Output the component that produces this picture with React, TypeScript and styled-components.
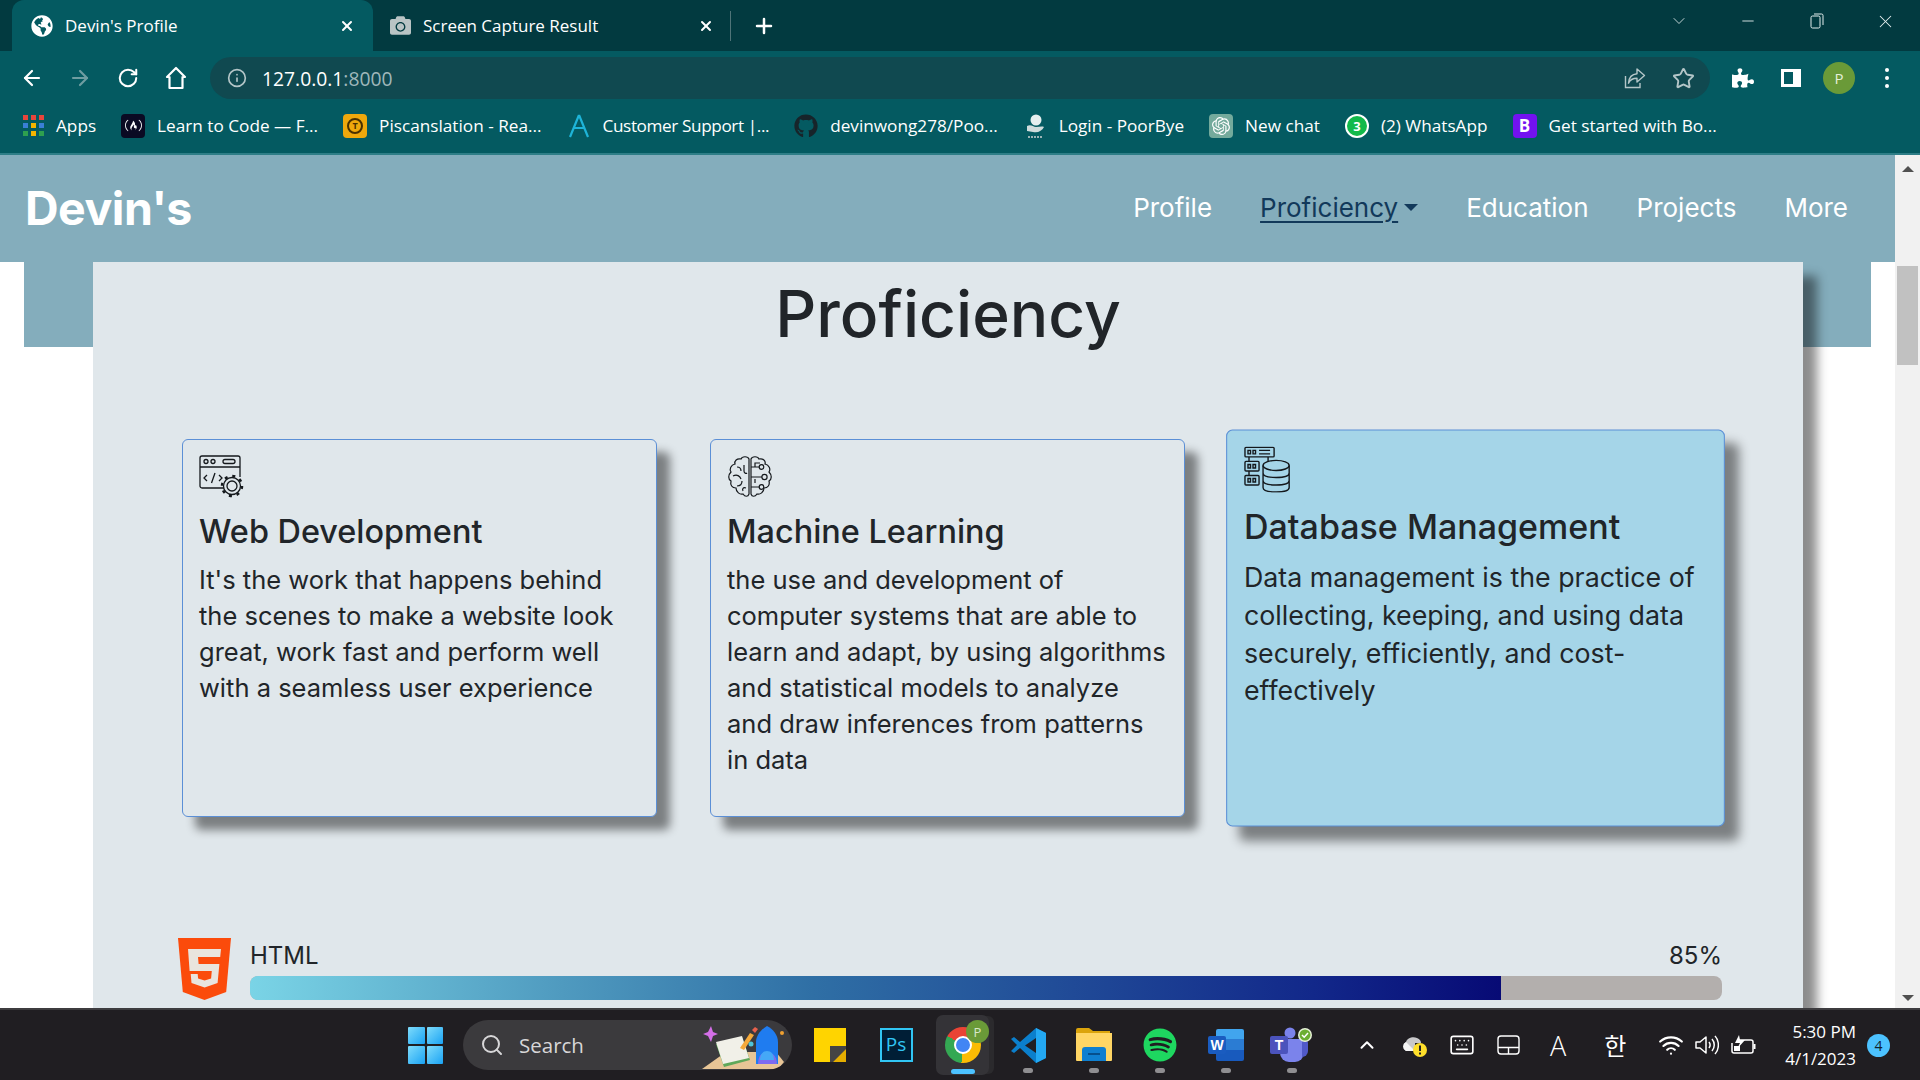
import React from "react"
import styled, { createGlobalStyle } from "styled-components"
import {
  ArrowLeft, ArrowRight, RotateCw, Info, Star, Plus, X, ChevronDown, ChevronUp,
  Minus, Search, Wifi, Keyboard,
} from "lucide-react"
import { FaGithub, FaPuzzlePiece, FaCamera, FaGlobeAmericas, FaFreeCodeCamp, FaSpotify } from "react-icons/fa"
import { SiOpenai } from "react-icons/si"

const UI_FONT = `"Open Sans", "Noto Sans", sans-serif`
const PAGE_FONT = `Inter, "Noto Sans", sans-serif`

const GlobalStyle = createGlobalStyle`
  html, body { margin: 0; padding: 0; height: 100%; overflow: hidden; background: #fff; }
  * { box-sizing: border-box; }
  #root { height: 100%; }
`

const Screen = styled.div`
  width: 1920px;
  height: 1080px;
  display: flex;
  flex-direction: column;
  overflow: hidden;
`

/* ---------- browser chrome ---------- */
const TabStrip = styled.div`
  height: 51px;
  flex: none;
  background: #023a40;
  display: flex;
  padding-left: 12px;
  color: #fff;
  font-family: ${UI_FONT};
`
const Tab = styled.div<{ $active?: boolean }>`
  width: 361px;
  height: 51px;
  display: flex;
  align-items: center;
  gap: 12px;
  padding: 0 18px 0 19px;
  font-size: 17px;
  margin-left: ${(p) => (p.$active ? 0 : -2)}px;
  background: ${(p) => (p.$active ? "#045a61" : "transparent")};
  border-radius: 12px 12px 0 0;
`
const TabTitle = styled.span`
  flex: 1;
  white-space: nowrap;
`
const TabDivider = styled.div`
  width: 1px;
  height: 30px;
  margin: 11px 0 0 -2px;
  background: #4f7478;
`
const NewTab = styled.div`
  margin-left: 21px;
  height: 51px;
  display: flex;
  align-items: center;
`
const WindowControls = styled.div`
  margin-left: auto;
  display: flex;
`
const WindowButton = styled.div`
  width: 69px;
  height: 42px;
  display: flex;
  align-items: center;
  justify-content: center;
  color: #e4eeee;
`
const RestoreIcon = () => (
  <svg width="14" height="16" viewBox="0 0 14 16" fill="none" stroke="currentColor" strokeWidth="1">
    <rect x="1" y="3" width="9" height="12" rx="1.5" />
    <path d="M4 1h7.5a1.5 1.5 0 0 1 1.5 1.5V12" />
  </svg>
)

const Toolbar = styled.div`
  height: 54px;
  flex: none;
  background: #045a61;
  display: flex;
  align-items: center;
  padding: 0 9px 0 8px;
  color: #fff;
  font-family: ${UI_FONT};
`
const ToolButton = styled.div<{ $dim?: boolean }>`
  width: 48px;
  height: 42px;
  flex: none;
  display: flex;
  align-items: center;
  justify-content: center;
  color: ${(p) => (p.$dim ? "#6f9da1" : "#fff")};
`
const AddressBar = styled.div`
  flex: 1;
  height: 42px;
  margin: 0 9px 0 10px;
  padding: 0 3px 0 17px;
  display: flex;
  align-items: center;
  background: #104950;
  border-radius: 21px;
`
const Url = styled.div`
  margin-left: 15px;
  font-size: 19.3px;
  flex: 1;
`
const UrlPort = styled.span`
  color: #9fb7ba;
`
const AddressIcon = styled.div`
  width: 48px;
  display: flex;
  justify-content: center;
  color: #b4c6c8;
`
const Avatar = styled.div`
  width: 32px;
  height: 32px;
  border-radius: 50%;
  background: #6a9a38;
  color: #e4efd8;
  font-size: 15px;
  display: flex;
  align-items: center;
  justify-content: center;
`
const MenuDots = styled.div`
  display: flex;
  flex-direction: column;
  gap: 4px;
`
const MenuDot = styled.i`
  display: block;
  width: 4px;
  height: 4px;
  border-radius: 50%;
  background: #fff;
`
const ShareIcon = () => (
  <svg width="22" height="22" viewBox="0 0 22 22" fill="none" stroke="currentColor" strokeWidth="1.4">
    <path d="M1.5 9v11.5H16V16" />
    <path d="M13 2l7.5 6.5L13 15v-3.8c-4 0-7 1.4-8.5 5 .4-5.400 3.500-9 8.500-9.400z" strokeLinejoin="round" />
  </svg>
)
const SidePanelIcon = () => (
  <svg width="22" height="22" viewBox="0 0 22 22">
    <path d="M1 2h20v18H1z" fill="#fff" />
    <path d="M4 5h9v12H4z" fill="#045a61" />
  </svg>
)
const HouseIcon = () => (
  <svg width="22" height="24" viewBox="0 0 22 24" fill="none" stroke="#fff" strokeWidth="2.200" strokeLinejoin="round">
    <path d="M11 2L2 11h2.500v11h13V11H20z" />
  </svg>
)

const Bookmarks = styled.div`
  height: 50px;
  flex: none;
  background: #045a61;
  border-bottom: 2px solid #2e7e87;
  padding: 0 0 7px 23px;
  display: flex;
  align-items: center;
  gap: 25px;
  color: #fff;
  font-family: ${UI_FONT};
  font-size: 17.2px;
`
const Bookmark = styled.div<{ $tight?: boolean }>`
  display: flex;
  align-items: center;
  gap: 12px;
  white-space: nowrap;
  letter-spacing: ${(p) => (p.$tight ? "-0.4px" : "normal")};
`
const AppsGrid = styled.div`
  width: 21px;
  display: grid;
  grid-template-columns: repeat(3, 5px);
  gap: 3px;
`
const AppsCell = styled.i<{ $color: string }>`
  height: 5px;
  background: ${(p) => p.$color};
`
const FavTile = styled.div<{ $bg: string; $fg?: string }>`
  width: 24px;
  height: 24px;
  flex: none;
  display: flex;
  align-items: center;
  justify-content: center;
  background: ${(p) => p.$bg};
  color: ${(p) => p.$fg || "#fff"};
  border-radius: 4px;
  font-weight: 700;
  font-size: 17px;
`
const PiscanDisc = styled.div`
  width: 16px;
  height: 16px;
  border-radius: 50%;
  border: 2px solid #4a3000;
  color: #4a3000;
  font-size: 9px;
  line-height: 12px;
  text-align: center;
`
const WhatsBadge = styled.div`
  width: 24px;
  height: 24px;
  flex: none;
  border-radius: 50%;
  border: 2px solid #fff;
  background: #12b94a;
  font-size: 13px;
  font-weight: 700;
  display: flex;
  align-items: center;
  justify-content: center;
`
const AntennaIcon = () => (
  <svg width="24" height="24" viewBox="0 0 24 24" fill="none" stroke="#1eb4d8" strokeWidth="2.200">
    <path d="M12 1L3 23M12 1l9 22M7 14h10" />
  </svg>
)
const PoorByeIcon = () => (
  <svg width="24" height="26" viewBox="0 0 24 26">
    <circle cx="13" cy="7" r="5.500" fill="#e5efef" />
    <path d="M4 13c4-2 6 1 9 1s6-1 8 0c-2 4-6 6-11 5l-6-1z" fill="#cfdcdc" />
    <path d="M5 24h14" stroke="#9ab3b5" strokeWidth="2" strokeDasharray="2 1" />
  </svg>
)

/* ---------- page ---------- */
const PageRow = styled.div`
  flex: 1;
  min-height: 0;
  display: flex;
  font-family: ${PAGE_FONT};
  color: #212529;
`
const PageMain = styled.div`
  flex: 1;
  min-width: 0;
  background: #fff;
  overflow: hidden;
`
const Navbar = styled.nav`
  height: 107px;
  background: #84adbc;
  display: flex;
  align-items: center;
  padding: 0 47px 2px 25px;
`
const Brand = styled.div`
  font-size: 46.5px;
  font-weight: 700;
  letter-spacing: -0.5px;
  color: #fff;
`
const NavLinks = styled.div`
  margin-left: auto;
  display: flex;
  gap: 48px;
`
const NavLink = styled.a<{ $active?: boolean }>`
  font-size: 26px;
  color: ${(p) => (p.$active ? "#12395a" : "#fff")};
  text-decoration: ${(p) => (p.$active ? "underline" : "none")};
  text-underline-offset: 4px;
  text-decoration-thickness: 2px;
  display: flex;
  align-items: center;
  gap: 6px;
`
const Caret = styled.i`
  width: 0;
  height: 0;
  border-left: 7px solid transparent;
  border-right: 7px solid transparent;
  border-top: 7px solid #12395a;
`
const Banner = styled.div`
  height: 85px;
  margin: 0 24px;
  background: #84adbc;
`
const Container = styled.main`
  position: relative;
  margin: -85px 92px 0 93px;
  height: 900px;
  background: #e0e7eb;
  box-shadow: 14px 14px 10px rgba(0, 0, 0, 0.45);
  padding-top: 14px;
`
const Heading = styled.h1`
  margin: 0;
  text-align: center;
  font-size: 64px;
  line-height: 76px;
  font-weight: 500;
`
const CardRow = styled.div`
  margin: 87px 0 0 89px;
  display: grid;
  grid-template-columns: repeat(3, 475px);
  gap: 53px;
`
const Card = styled.article<{ $raised?: boolean }>`
  height: 378px;
  padding: 15px 16px;
  border: 1px solid #5b8fd6;
  border-radius: 6px;
  background: ${(p) => (p.$raised ? "#a5d5e8" : "#e0e7eb")};
  box-shadow: 13px 13px 10px rgba(0, 0, 0, 0.45);
  transform: ${(p) => (p.$raised ? "scale(1.05)" : "none")};
`
const CardIcon = styled.div`
  height: 44px;
  color: #14181c;
`
const CardTitle = styled.h3`
  margin: 13px 0 0;
  font-size: 32.4px;
  line-height: 40px;
  font-weight: 500;
`
const CardText = styled.p`
  margin: 10px 0 0;
  font-size: 25.5px;
  line-height: 36px;
`
const SkillRow = styled.div`
  margin: 121px 0 0 85px;
  width: 1544px;
  display: flex;
  gap: 19px;
`
const SkillBody = styled.div`
  flex: 1;
  padding-top: 2px;
`
const SkillLabels = styled.div`
  display: flex;
  justify-content: space-between;
  font-size: 24px;
  line-height: 31px;
  margin-bottom: 5px;
`
const Track = styled.div`
  height: 24px;
  border-radius: 8px;
  background: #b3afad;
  overflow: hidden;
`
const Fill = styled.div`
  height: 100%;
  background: linear-gradient(90deg, #7ad4e6 0%, #4f9abf 25%, #2f6fa5 45%, #12288a 85%, #070a75 100%);
`
const ScrollTrack = styled.div`
  width: 25px;
  flex: none;
  background: #f1f1f1;
  display: flex;
  flex-direction: column;
  align-items: center;
  padding-top: 11px;
`
const ScrollArrow = styled.i<{ $down?: boolean }>`
  width: 0;
  height: 0;
  border-left: 6px solid transparent;
  border-right: 6px solid transparent;
  ${(p) => (p.$down ? "border-top: 6px solid #505050; margin-bottom: 7px;" : "border-bottom: 6px solid #505050;")}
`
const ScrollThumb = styled.div`
  width: 21px;
  height: 99px;
  margin: 94px 0 auto;
  background: #c1c1c1;
`

/* ---------- taskbar ---------- */
const Taskbar = styled.footer`
  height: 72px;
  flex: none;
  background: #201e22;
  border-top: 2px solid #3d3c3f;
  display: flex;
  align-items: center;
  padding: 0 30px 0 408px;
  color: #fff;
  font-family: ${UI_FONT};
`
const StartGrid = styled.div`
  width: 35px;
  height: 37px;
  display: grid;
  grid-template-columns: 1fr 1fr;
  gap: 2px;
`
const StartPane = styled.i`
  background: linear-gradient(135deg, #7fdcfb, #1aa3f4);
  border-radius: 1px;
`
const SearchPill = styled.div`
  position: relative;
  width: 329px;
  height: 50px;
  margin: 0 5px 0 20px;
  padding-left: 17px;
  border-radius: 25px;
  background: #3b3a3d;
  display: flex;
  align-items: center;
  gap: 15px;
  font-size: 20.5px;
  color: #d7d6d8;
  overflow: hidden;
`
const SearchArt = styled.svg`
  position: absolute;
  right: 8px;
  bottom: 0;
`
const TaskSlot = styled.div<{ $running?: boolean; $open?: boolean }>`
  position: relative;
  width: 66px;
  height: 60px;
  flex: none;
  display: flex;
  align-items: center;
  justify-content: center;
  ${(p) => (p.$open ? "&::after { content: ''; position: absolute; bottom: 2px; left: 50%; margin-left: -5px; width: 10px; height: 5px; border-radius: 3px; background: #8f8e91; }" : "")}
  ${(p) => (p.$running ? "background: #343337; border-radius: 7px; width: 53px; margin: 0 6px 0 7px; box-shadow: 6px 0 0 -1px #2b2a2d; &::after { content: ''; position: absolute; bottom: 1px; left: 50%; margin-left: -12px; width: 24px; height: 5px; border-radius: 3px; background: #4cc2ff; }" : "")}
`
const SlotBadge = styled.div`
  position: absolute;
  top: 5px;
  right: 0;
  width: 23px;
  height: 23px;
  border-radius: 50%;
  background: #6a9a38;
  color: #d9e6c9;
  font-size: 13px;
  display: flex;
  align-items: center;
  justify-content: center;
`
const ChromeBall = styled.div`
  width: 36px;
  height: 36px;
  border-radius: 50%;
  background: conic-gradient(from -60deg, #ea4335 0 125deg, #fbbc04 125deg 245deg, #34a853 245deg 360deg);
  display: flex;
  align-items: center;
  justify-content: center;
`
const ChromeEye = styled.i`
  width: 18px;
  height: 18px;
  border-radius: 50%;
  background: #4285f4;
  border: 2.500px solid #fff;
`
const PsTile = styled.div`
  width: 33px;
  height: 34px;
  background: #001e36;
  border: 2px solid #31c5f4;
  color: #31c5f4;
  font-size: 19px;
  line-height: 28px;
  text-align: center;
`
const Tray = styled.div<{ $ml: number }>`
  margin-left: ${(p) => p.$ml}px;
  display: flex;
  align-items: center;
  flex: none;
`
const Clock = styled.div`
  margin-left: auto;
  text-align: right;
  font-size: 17px;
  line-height: 27px;
`
const NotifyBadge = styled.div`
  width: 23px;
  height: 23px;
  margin-left: 11px;
  border-radius: 50%;
  background: #4cc2ff;
  color: #10222c;
  font-size: 14px;
  display: flex;
  align-items: center;
  justify-content: center;
`
const Glyph = styled.span`
  font-family: "Noto Sans CJK KR", ${UI_FONT};
  font-size: 24px;
  line-height: 1;
`
const LightA = styled.span`
  font-family: ${UI_FONT};
  font-size: 27px;
  font-weight: 300;
  line-height: 1;
`

/* ---------- drawn icons ---------- */
const WebDevIcon = () => (
  <svg width="46" height="44" viewBox="0 0 46 44" fill="none" stroke="currentColor" strokeWidth="1.300">
    <path d="M25 33H3a2 2 0 0 1-2-2V3a2 2 0 0 1 2-2h36a2 2 0 0 1 2 2v19" />
    <path d="M1 12h40" />
    <circle cx="7" cy="6.500" r="2" /><circle cx="14" cy="6.500" r="2" />
    <rect x="24" y="4.500" width="12" height="4" rx="2" />
    <path d="M8 20l-3 3 3 3M20 20l3 3-3 3M16 18l-3.500 10" />
    <circle cx="33" cy="31" r="5" />
    <circle cx="33" cy="31" r="8.500" strokeWidth="1.300" />
    <circle cx="33" cy="31" r="10" strokeWidth="2.500" strokeDasharray="3 4.850" />
  </svg>
)
const BrainIcon = () => (
  <svg width="46" height="44" viewBox="0 0 46 44" fill="none" stroke="currentColor" strokeWidth="1.200">
    <path d="M22 4c-1-3-7-3-8 0-4-1-7 2-6 5-4 1-6 5-4 8-3 3-3 7 0 9-1 4 1 7 5 7 0 4 4 7 7 6 2 3 5 3 6 0V4z" />
    <path d="M24 4c1-3 7-3 8 0 4-1 7 2 6 5 4 1 6 5 4 8 3 3 3 7 0 9 1 4-1 7-5 7 0 4-4 7-7 6-2 3-5 3-6 0V4z" />
    <path d="M10 12c3 0 4 2 4 4M6 21c4-2 7 0 8 3M17 10v6c0 2 2 3 3 2M10 31c3 0 5-2 5-5M19 33c-3-1-4 1-3 3" />
    <path d="M24 12h8M24 22h11M24 32h8M28 12v-4h5M28 28v-4" />
    <circle cx="34.500" cy="12" r="2.300" /><circle cx="37.500" cy="22" r="2.600" /><circle cx="34.500" cy="32" r="2.300" />
  </svg>
)
const DatabaseIcon = () => (
  <svg width="44" height="44" viewBox="0 0 46 46" fill="none" stroke="currentColor" strokeWidth="1.400">
    <rect x="1" y="1" width="29" height="9.500" rx="1" />
    <rect x="1" y="15" width="14" height="9.500" rx="1" />
    <rect x="1" y="29" width="14" height="9.500" rx="1" />
    <path d="M4 4h2.500v3.500H4zM9 4h2.500v3.500H9zM4 18h2.500v3.500H4zM9 18h2.500v3.500H9zM4 32h2.500v3.500H4zM9 32h2.500v3.500H9zM15 4h11M15 7.500h11M5 10.500V15M5 24.500V29M24 10.500v4" />
    <ellipse cx="32" cy="19" rx="13" ry="5" />
    <path d="M19 19v22c0 3 6 4.500 13 4.500S45 44 45 41V19M19 26.500c0 3 6 4.500 13 4.500s13-1.500 13-4.500M19 34c0 3 6 4.500 13 4.500S45 37 45 34" />
  </svg>
)
const Html5Icon = () => (
  <svg width="53" height="62" viewBox="0 0 53 62">
    <path d="M0 0h53l-4.800 54L26.500 62 4.800 54z" fill="#fb4b0b" />
    <path d="M10 11h33l-.8 8H20l.6 7h20.800l-1.800 19-13 4.500L13.500 45l-.8-9h7l.4 4.500 6.500 2 6.500-2 .7-7.500H11.600z" fill="#e9e4dd" />
  </svg>
)
const StudyArt = () => (
  <SearchArt width="82" height="46" viewBox="0 0 82 46">
    <path d="M0 45l24-17h50l8 10-6 7z" fill="#e8c596" />
    <path d="M14 20l26-7 8 23-26 7z" fill="#5fa85a" />
    <path d="M14 18l26-6 7 22-26 6z" fill="#f1f0e8" />
    <path d="M38 24l10-15 4 2-10 15z" fill="#f4a93b" />
    <path d="M50 6l3-3 3 2-3 4z" fill="#e8614d" />
    <path d="M54 40V18c0-7 6-13 11-16 6 3 11 9 11 16v22z" fill="#1f7cf0" />
    <path d="M56 40c0-8 4-12 9-12s10 4 10 12z" fill="#7d6bf0" />
    <path d="M58 36c0-6 3-9 7-9s7 3 7 9z" fill="#45a8f7" />
    <path d="M2 12l3-6 2 6 5 2-5 2-2 6-3-6-5-2z" fill="#d46fe8" transform="translate(4 -4)" />
    <circle cx="49" cy="20" r="2.500" fill="#4fc3d8" />
    <circle cx="80" cy="9" r="2" fill="#f0a030" />
  </SearchArt>
)
const StickyIcon = () => (
  <svg width="32" height="34" viewBox="0 0 32 34">
    <path d="M0 0h32v24L22 34H0z" fill="#ffd400" />
    <path d="M16 18h16v6L22 34h-6z" fill="#444" />
    <path d="M32 18v3L19 34h13z" fill="#e5ae00" />
  </svg>
)
const VsCodeIcon = () => (
  <svg width="37" height="37" viewBox="0 0 37 37">
    <path d="M26 1l10 5v25l-10 5-16-15-6 5-3-2 6-6-6-6 3-2 6 5z" fill="#0b7fcc" />
    <path d="M26 1l10 5v25l-10 5z" fill="#23a8f2" />
    <path d="M26 11L15 18.500 26 26z" fill="#201e22" />
  </svg>
)
const FolderIcon = () => (
  <svg width="36" height="34" viewBox="0 0 36 34">
    <path d="M0 2a2 2 0 0 1 2-2h11l4 3h17v5H0z" fill="#dba40c" />
    <path d="M0 5h36v27a1 1 0 0 1-1 1H1a1 1 0 0 1-1-1z" fill="#ffd665" />
    <path d="M6 33V22a3 3 0 0 1 3-3h18a3 3 0 0 1 3 3v11z" fill="#0f7fd0" />
    <path d="M12 26h12" stroke="#064f8c" strokeWidth="2" />
  </svg>
)
const WordIcon = () => (
  <svg width="36" height="32" viewBox="0 0 36 32">
    <path d="M8 2a2 2 0 0 1 2-2h24a2 2 0 0 1 2 2v8H8z" fill="#41a5ee" />
    <path d="M8 10h28v11H8z" fill="#2b7cd3" />
    <path d="M8 21h28v9a2 2 0 0 1-2 2H10a2 2 0 0 1-2-2z" fill="#185abd" />
    <rect x="0" y="7" width="18" height="18" rx="2" fill="#1a5cc0" />
    <text x="9" y="21" textAnchor="middle" fontSize="14" fontWeight="700" fill="#fff" fontFamily="Liberation Sans">W</text>
  </svg>
)
const TeamsIcon = () => (
  <svg width="44" height="36" viewBox="0 0 44 36">
    <circle cx="20" cy="6" r="5.500" fill="#7b83eb" />
    <path d="M10 12h24v14a9 9 0 0 1-9 9h-6a9 9 0 0 1-9-9z" fill="#7b83eb" />
    <path d="M32 14h4a2 2 0 0 1 2 2v8a6 6 0 0 1-6 6z" fill="#5059c9" />
    <rect x="0" y="9" width="18" height="18" rx="2" fill="#4b53bc" />
    <text x="9" y="23" textAnchor="middle" fontSize="14" fontWeight="700" fill="#fff" fontFamily="Liberation Sans">T</text>
    <circle cx="35" cy="8" r="7" fill="#e7f2d9" />
    <circle cx="35" cy="8" r="5.500" fill="#6cae32" />
    <path d="M32 8l2.200 2.200L38 6" stroke="#fff" strokeWidth="1.500" fill="none" />
  </svg>
)
const CloudWarnIcon = () => (
  <svg width="24" height="24" viewBox="0 0 24 24">
    <path d="M3 18a5 5 0 0 1 0-9c1-4 7-6 11-4 3 1 4 3 4 5H12v8z" fill="#c9c9cb" />
    <path d="M3 18a5 5 0 0 1 0-9l9 9z" fill="#f5f5f5" />
    <circle cx="17" cy="17" r="7" fill="#ffdf2b" />
    <path d="M17 12.500v5.500M17 19.500v2" stroke="#201e22" strokeWidth="2" />
  </svg>
)
const TouchpadIcon = () => (
  <svg width="23" height="20" viewBox="0 0 23 20" fill="none" stroke="#fff" strokeWidth="1.400">
    <rect x="1" y="1" width="21" height="18" rx="3" />
    <path d="M1 12.500h21M11.500 12.500V19" />
  </svg>
)
const SpeakerIcon = () => (
  <svg width="24" height="22" viewBox="0 0 24 22" fill="none" stroke="#fff" strokeWidth="1.500">
    <path d="M1 8v6h4l6 5V3L5 8z" strokeLinejoin="round" />
    <path d="M14 8c1.500 2 1.500 4 0 6M17 5c3 3.500 3 8.500 0 12M20 2c4.500 5 4.500 13 0 18" />
  </svg>
)
const BatteryIcon = () => (
  <svg width="25" height="22" viewBox="0 0 25 22" fill="none" stroke="#fff" strokeWidth="1.500">
    <path d="M8 6h12a2 2 0 0 1 2 2v9a2 2 0 0 1-2 2H3a2 2 0 0 1-2-2V9" />
    <path d="M23.500 10v5" strokeWidth="2" />
    <path d="M8 1L4 9h5l-3 6 8-9H9z" fill="#fff" stroke="none" />
    <path d="M3 12h6v5H3z" fill="#fff" stroke="none" />
  </svg>
)

const APPS_COLORS = ["#e8453c", "#e8453c", "#e8453c", "#3a7fd6", "#f4b400", "#3a7fd6", "#2ea04f", "#f4b400", "#2ea04f"]

export default function App() {
  return (
    <>
      <GlobalStyle />
      <Screen>
        <TabStrip>
          <Tab $active>
            <FaGlobeAmericas size={22} />
            <TabTitle>Devin's Profile</TabTitle>
            <X size={16} strokeWidth={3} />
          </Tab>
          <Tab>
            <FaCamera size={21} color="#b9c4c5" />
            <TabTitle>Screen Capture Result</TabTitle>
            <X size={16} strokeWidth={3} />
          </Tab>
          <TabDivider />
          <NewTab><Plus size={24} strokeWidth={2.5} /></NewTab>
          <WindowControls>
            <WindowButton><ChevronDown size={20} strokeWidth={1} /></WindowButton>
            <WindowButton><Minus size={18} strokeWidth={1.2} /></WindowButton>
            <WindowButton><RestoreIcon /></WindowButton>
            <WindowButton><X size={21} strokeWidth={1.2} /></WindowButton>
          </WindowControls>
        </TabStrip>

        <Toolbar>
          <ToolButton><ArrowLeft size={24} strokeWidth={2.2} /></ToolButton>
          <ToolButton $dim><ArrowRight size={24} strokeWidth={2.2} /></ToolButton>
          <ToolButton><RotateCw size={22} strokeWidth={2.2} /></ToolButton>
          <ToolButton><HouseIcon /></ToolButton>
          <AddressBar>
            <Info size={20} color="#b4c6c8" />
            <Url>127.0.0.1<UrlPort>:8000</UrlPort></Url>
            <AddressIcon><ShareIcon /></AddressIcon>
            <AddressIcon><Star size={23} strokeWidth={2} /></AddressIcon>
          </AddressBar>
          <ToolButton><FaPuzzlePiece size={22} /></ToolButton>
          <ToolButton><SidePanelIcon /></ToolButton>
          <ToolButton><Avatar>P</Avatar></ToolButton>
          <ToolButton><MenuDots><MenuDot /><MenuDot /><MenuDot /></MenuDots></ToolButton>
        </Toolbar>

        <Bookmarks>
          <Bookmark>
            <AppsGrid>{APPS_COLORS.map((c, i) => <AppsCell key={i} $color={c} />)}</AppsGrid>
            Apps
          </Bookmark>
          <Bookmark><FavTile $bg="#0a0a23"><FaFreeCodeCamp size={17} /></FavTile>Learn to Code — F...</Bookmark>
          <Bookmark><FavTile $bg="#efa80c"><PiscanDisc>T</PiscanDisc></FavTile>Piscanslation - Rea...</Bookmark>
          <Bookmark $tight><AntennaIcon />Customer Support |...</Bookmark>
          <Bookmark><FaGithub size={24} color="#17242a" />devinwong278/Poo...</Bookmark>
          <Bookmark><PoorByeIcon />Login - PoorBye</Bookmark>
          <Bookmark><FavTile $bg="#74aa9c"><SiOpenai size={18} /></FavTile>New chat</Bookmark>
          <Bookmark><WhatsBadge>3</WhatsBadge>(2) WhatsApp</Bookmark>
          <Bookmark><FavTile $bg="#7312f0">B</FavTile>Get started with Bo...</Bookmark>
        </Bookmarks>

        <PageRow>
          <PageMain>
            <Navbar>
              <Brand>Devin's</Brand>
              <NavLinks>
                <NavLink>Profile</NavLink>
                <NavLink $active>Proficiency<Caret /></NavLink>
                <NavLink>Education</NavLink>
                <NavLink>Projects</NavLink>
                <NavLink>More</NavLink>
              </NavLinks>
            </Navbar>
            <Banner />
            <Container>
              <Heading>Proficiency</Heading>
              <CardRow>
                <Card>
                  <CardIcon><WebDevIcon /></CardIcon>
                  <CardTitle>Web Development</CardTitle>
                  <CardText>It's the work that happens behind the scenes to make a website look great, work fast and perform well with a seamless user experience</CardText>
                </Card>
                <Card>
                  <CardIcon><BrainIcon /></CardIcon>
                  <CardTitle>Machine Learning</CardTitle>
                  <CardText>the use and development of computer systems that are able to learn and adapt, by using algorithms and statistical models to analyze and draw inferences from patterns in data</CardText>
                </Card>
                <Card $raised>
                  <CardIcon><DatabaseIcon /></CardIcon>
                  <CardTitle>Database Management</CardTitle>
                  <CardText>Data management is the practice of collecting, keeping, and using data securely, efficiently, and cost-effectively</CardText>
                </Card>
              </CardRow>
              <SkillRow>
                <Html5Icon />
                <SkillBody>
                  <SkillLabels><span>HTML</span><span>85%</span></SkillLabels>
                  <Track><Fill style={{ width: "85%" }} /></Track>
                </SkillBody>
              </SkillRow>
            </Container>
          </PageMain>
          <ScrollTrack>
            <ScrollArrow />
            <ScrollThumb />
            <ScrollArrow $down />
          </ScrollTrack>
        </PageRow>

        <Taskbar>
          <StartGrid><StartPane /><StartPane /><StartPane /><StartPane /></StartGrid>
          <SearchPill>
            <Search size={24} strokeWidth={2} />
            Search
            <StudyArt />
          </SearchPill>
          <TaskSlot><StickyIcon /></TaskSlot>
          <TaskSlot><PsTile>Ps</PsTile></TaskSlot>
          <TaskSlot $running><ChromeBall><ChromeEye /></ChromeBall><SlotBadge>P</SlotBadge></TaskSlot>
          <TaskSlot $open><VsCodeIcon /></TaskSlot>
          <TaskSlot $open><FolderIcon /></TaskSlot>
          <TaskSlot $open><FaSpotify size={34} color="#1ed760" /></TaskSlot>
          <TaskSlot $open><WordIcon /></TaskSlot>
          <TaskSlot $open><TeamsIcon /></TaskSlot>
          <Tray $ml={31}><ChevronUp size={22} strokeWidth={2.2} /></Tray>
          <Tray $ml={25}><CloudWarnIcon /></Tray>
          <Tray $ml={22}><Keyboard size={26} strokeWidth={1.5} /></Tray>
          <Tray $ml={22}><TouchpadIcon /></Tray>
          <Tray $ml={30}><LightA>A</LightA></Tray>
          <Tray $ml={38}><Glyph>한</Glyph></Tray>
          <Tray $ml={32}><Wifi size={26} strokeWidth={2} /></Tray>
          <Tray $ml={11}><SpeakerIcon /></Tray>
          <Tray $ml={12}><BatteryIcon /></Tray>
          <Clock>5:30 PM<br />4/1/2023</Clock>
          <NotifyBadge>4</NotifyBadge>
        </Taskbar>
      </Screen>
    </>
  )
}
